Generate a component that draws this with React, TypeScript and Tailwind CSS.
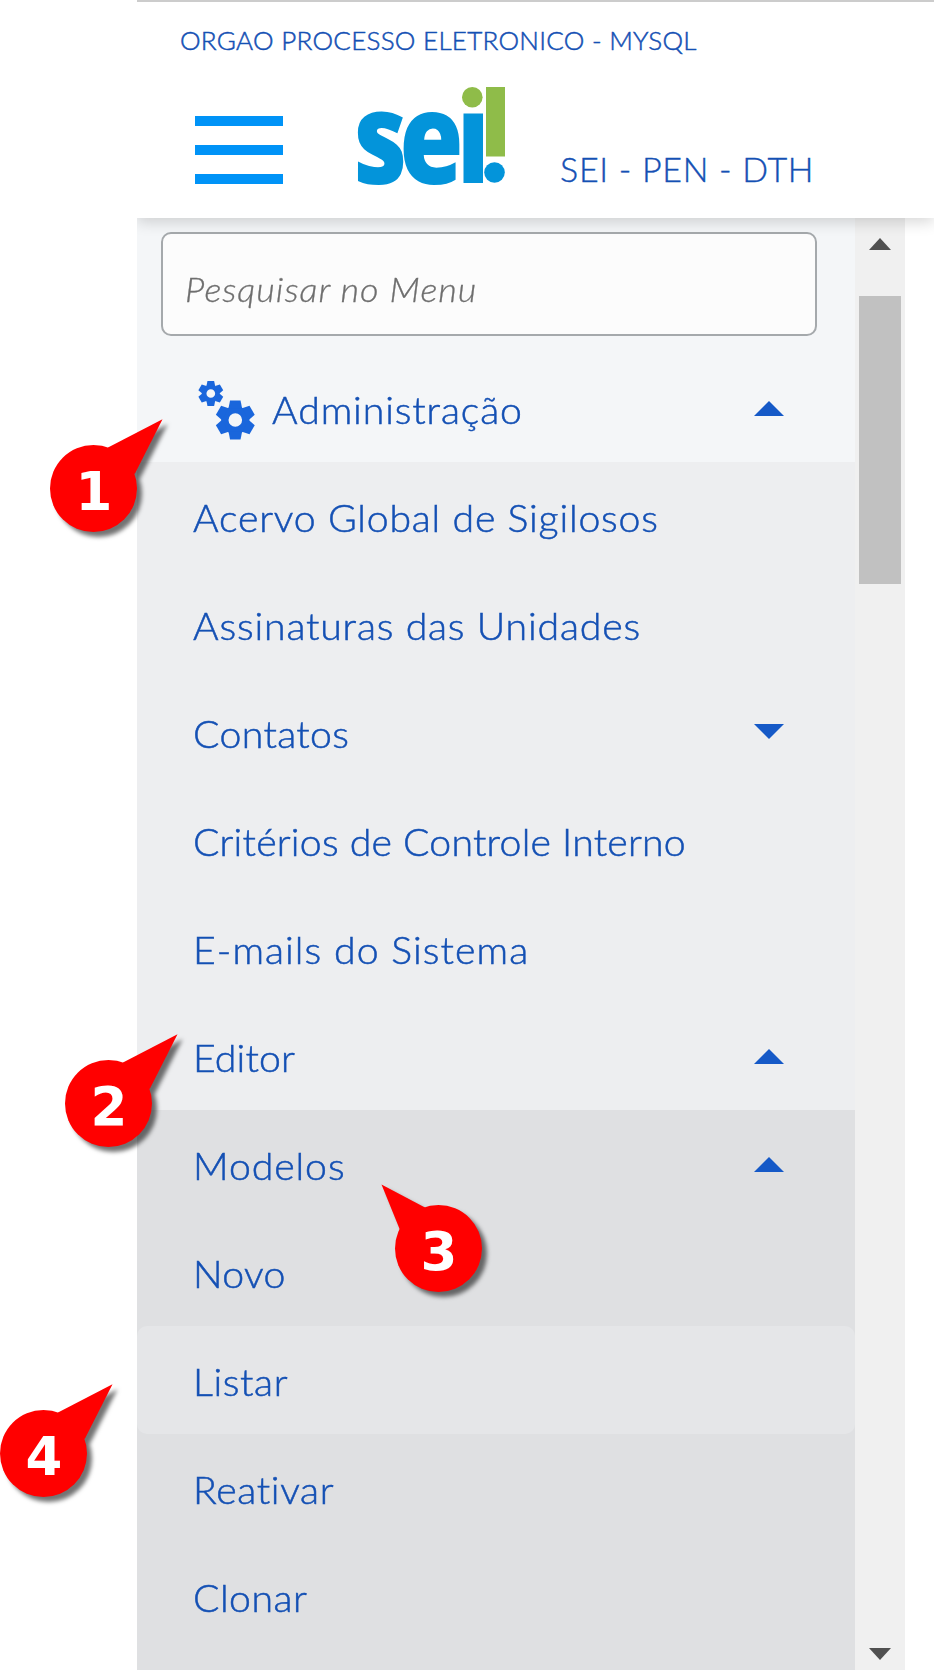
import React from "react";

type Item = { label: string; tracking: string; caret?: "up" | "down"; bg: string; active?: boolean };

const items: Item[] = [
  { label: "Acervo Global de Sigilosos", tracking: "tracking-[0.75px]", bg: "bg-[#edeef0]" },
  { label: "Assinaturas das Unidades", tracking: "tracking-[0.77px]", bg: "bg-[#edeef0]" },
  { label: "Contatos", tracking: "tracking-[0.34px]", caret: "down", bg: "bg-[#edeef0]" },
  { label: "Critérios de Controle Interno", tracking: "tracking-[0.2px]", bg: "bg-[#edeef0]" },
  { label: "E-mails do Sistema", tracking: "tracking-[1px]", bg: "bg-[#edeef0]" },
  { label: "Editor", tracking: "tracking-[0.1px]", caret: "up", bg: "bg-[#edeef0]" },
  { label: "Modelos", tracking: "tracking-[0.85px]", caret: "up", bg: "bg-[#dfe0e2]" },
  { label: "Novo", tracking: "tracking-[0.3px]", bg: "bg-[#dfe0e2]" },
  { label: "Listar", tracking: "tracking-[0.57px]", bg: "bg-[#dfe0e2]", active: true },
  { label: "Reativar", tracking: "tracking-[0.6px]", bg: "bg-[#dfe0e2]" },
  { label: "Clonar", tracking: "tracking-[0.43px]", bg: "bg-[#dfe0e2]" },
];

function Caret({ dir }: { dir: "up" | "down" }) {
  return (
    <svg className="h-[15px] w-[30px] shrink-0" viewBox="0 0 30 15" fill="#1559c7">
      <path d={dir === "up" ? "M0 15 15 0 30 15Z" : "M0 0 15 15 30 0Z"} />
    </svg>
  );
}

function Gear({ cx, cy, r }: { cx: number; cy: number; r: number }) {
  return (
    <g transform={`translate(${cx} ${cy}) scale(${r / 20})`} fill="#1a66dc">
      <path
        fillRule="evenodd"
        d="M-14.5 0a14.5 14.5 0 1 0 29 0a14.5 14.5 0 1 0 -29 0ZM-7 0a7 7 0 1 0 14 0a7 7 0 1 0 -14 0Z"
      />
      {[0, 60, 120, 180, 240, 300].map((a) => (
        <path key={a} transform={`rotate(${a})`} d="M-7 -12 -5.4 -20H5.4L7 -12Z" />
      ))}
    </g>
  );
}

function Logo() {
  return (
    <svg className="h-[110px] w-[160px] overflow-visible" viewBox="350 80 160 110" fill="#0394da">
      <text
        x="353.5"
        y="183.5"
        textLength="102"
        lengthAdjust="spacingAndGlyphs"
        letterSpacing="-10"
        fontFamily="'Open Sans', sans-serif"
        fontWeight="800"
        fontSize="128"
      >
        se
      </text>
      <rect x="463.5" y="113.5" width="19.5" height="69.5" />
      <circle cx="494.5" cy="172.5" r="10.3" />
      <circle cx="472.3" cy="97.2" r="10.3" fill="#8fbc49" />
      <rect x="486" y="87" width="19" height="69.5" fill="#8fbc49" />
    </svg>
  );
}

function Callout({ n, place, flip }: { n: string; place: string; flip?: boolean }) {
  return (
    <div className={`absolute h-[125px] w-[130px] ${place}`}>
      <svg className="absolute inset-0 h-full w-full overflow-visible" viewBox="0 0 130 125">
        <g className="[filter:drop-shadow(5px_5px_2px_rgb(0_0_0_/_0.55))]" fill="#f00">
          <circle cx="43.5" cy="78.5" r="43.5" />
          <path d={flip ? "M-13.5 14.5 30 37.5 43 78 5 60Z" : "M112.5 9.3 58 37.5 43 78 85 63.5Z"} />
        </g>
      </svg>
      <span className="absolute top-[51px] left-[0.5px] w-[87px] text-center font-['DejaVu_Sans'] text-[53px] leading-[62px] font-bold text-white">
        {n}
      </span>
    </div>
  );
}

export default function App() {
  return (
    <div className="relative h-[1670px] w-[934px] overflow-hidden bg-white font-['Lato',sans-serif] text-[#1450b4]">
      <div className="ml-[137px] flex h-full flex-col overflow-hidden">
        <header className="relative z-10 flex h-[218px] shrink-0 flex-col border-t-2 border-[#ccc] bg-white shadow-[0_4px_14px_rgba(0,0,0,0.16)]">
          <div className="pt-[23px] pl-[43px] text-[26px] leading-[30px] font-light tracking-[0.27px] whitespace-nowrap [-webkit-text-stroke:0.5px_#1450b4]">ORGAO PROCESSO ELETRONICO - MYSQL</div>
          <div className="flex pt-[25px]">
            <div className="mt-[36px] ml-[58px] flex h-[68px] w-[88px] flex-col justify-between">
              <i className="h-[10px] bg-[#0093f7]" />
              <i className="h-[10px] bg-[#0093f7]" />
              <i className="h-[10px] bg-[#0093f7]" />
            </div>
            <div className="ml-[67px]"><Logo /></div>
            <div className="mt-[68px] ml-[50px] text-[34px] leading-[42px] font-light tracking-[0.7px] whitespace-nowrap [-webkit-text-stroke:0.4px_#1450b4]">SEI - PEN - DTH</div>
          </div>
        </header>
        <div className="flex min-h-0 flex-1">
          <nav className="flex w-[718px] flex-col bg-[#f4f6f8]">
            <div className="mt-[14px] ml-[24px] flex h-[104px] w-[656px] shrink-0 items-center rounded-[10px] border-2 border-[#a5a9ac] bg-[#fcfcfc] pt-[9px] pl-[22px]">
              <span className="origin-left scale-x-106 text-[34px] leading-[40px] font-light tracking-[0.9px] text-[#6e6e6e] italic [-webkit-text-stroke:0.3px_#6e6e6e]">Pesquisar no Menu</span>
            </div>
            <div className="flex h-[126px] shrink-0 items-start pt-[42px]">
              <svg className="ml-[60px] h-[64px] w-[60px]" viewBox="197 378 60 64">
                <Gear cx={210.8} cy={393.5} r={12.4} />
                <Gear cx={235.3} cy={420} r={19.4} />
              </svg>
              <span className="mt-[10px] ml-[15px] origin-left scale-x-106 text-[37px] leading-[44px] font-light tracking-[0.83px] [-webkit-text-stroke:0.5px_#1450b4]">Administração</span>
              <span className="mt-[23px] mr-[71px] ml-auto flex"><Caret dir="up" /></span>
            </div>
            {items.map((it) => (
              <div key={it.label} className={`h-[108px] shrink-0 ${it.bg}`}>
                <div className={`flex h-full items-start pr-[71px] pl-[56px] ${it.active ? "rounded-[10px] bg-[#e5e6e8]" : ""}`}>
                  <span className={`mt-[34px] origin-left scale-x-106 text-[37px] leading-[44px] font-light whitespace-nowrap [-webkit-text-stroke:0.5px_#1450b4] ${it.tracking}`}>{it.label}</span>
                  {it.caret && (
                    <span className={`ml-auto flex ${it.caret === "up" ? "mt-[47px]" : "mt-[46px]"}`}><Caret dir={it.caret} /></span>
                  )}
                </div>
              </div>
            ))}
            <div className="flex-1 bg-[#dfe0e2]" />
          </nav>
          <div className="flex w-[50px] flex-col items-center bg-[#f0f0f0]">
            <svg className="mt-[20px] h-[12px] w-[22px]" viewBox="0 0 22 12" fill="#505050"><path d="M0 12 11 0 22 12Z" /></svg>
            <div className="mt-[46px] h-[288px] w-[42px] bg-[#c1c1c1]" />
            <svg className="mt-auto mb-[10px] h-[12px] w-[22px]" viewBox="0 0 22 12" fill="#505050"><path d="M0 0 11 12 22 0Z" /></svg>
          </div>
        </div>
      </div>
      <Callout n="1" place="left-[50px] top-[409.5px]" />
      <Callout n="2" place="left-[65px] top-[1025px]" />
      <Callout n="3" place="left-[395px] top-[1169.5px]" flip />
      <Callout n="4" place="left-0 top-[1375px]" />
    </div>
  );
}
